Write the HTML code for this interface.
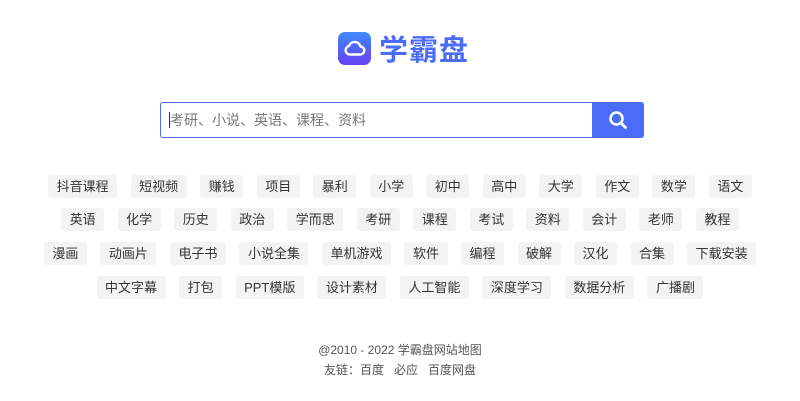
<!DOCTYPE html>
<html><head><meta charset="utf-8"><style>
body{margin:0;width:800px;height:401px;background:#fff;font-family:"Liberation Sans","Noto Sans CJK SC",sans-serif;overflow:hidden}
.logo{position:absolute;left:338px;top:27px;display:flex;align-items:center}
.ic{width:33px;height:33px;border-radius:7px;background:linear-gradient(180deg,#3d8bfd,#6a3df5);display:flex;align-items:center;justify-content:center}
.lt{margin-left:8px;font-size:29px;font-weight:bold;color:#4a6cf7;letter-spacing:1px;font-family:"Noto Sans CJK SC",sans-serif}
.search{position:absolute;left:160px;top:102px;width:484px;height:36px;display:flex}
.inp{flex:1;border:1px solid #4a6cf7;border-right:none;border-radius:3px 0 0 3px;box-sizing:border-box;font-size:14px;color:#777;line-height:34px;padding-left:8px}
.inp:before{content:"";display:inline-block;width:1px;height:16px;background:#333;vertical-align:-3px}
.btn{width:52px;background:#4a6cf7;border-radius:0 3px 3px 0;display:flex;align-items:center;justify-content:center}
.row{position:absolute;left:0;width:800px;display:flex;justify-content:center;gap:13.5px}
.row span{height:23px;line-height:23px;padding:0 8.5px;background:#f3f3f3;border-radius:3px;font-size:13px;color:#333}
.foot{position:absolute;left:0;width:800px;text-align:center;font-size:12px;color:#555}
</style></head><body>
<div class="logo"><div class="ic"><svg width="22" height="18" viewBox="0 0 22 18"><path d="M6 15.5h10a4 4 0 0 0 .5-8A6 6 0 0 0 5 7a4.3 4.3 0 0 0 1 8.5z" fill="none" stroke="#fff" stroke-width="2.4" stroke-linejoin="round"/></svg></div><div class="lt">学霸盘</div></div>
<div class="search"><div class="inp">考研、小说、英语、课程、资料</div><div class="btn"><svg width="20" height="20" viewBox="0 0 20 20"><circle cx="8.5" cy="8.5" r="6" fill="none" stroke="#fff" stroke-width="2.6"/><path d="M13 13l4.5 4.5" stroke="#fff" stroke-width="2.8" stroke-linecap="round"/></svg></div></div>
<div class="row" style="top:175px"><span>抖音课程</span><span>短视频</span><span>赚钱</span><span>项目</span><span>暴利</span><span>小学</span><span>初中</span><span>高中</span><span>大学</span><span>作文</span><span>数学</span><span>语文</span></div>
<div class="row" style="top:208px"><span>英语</span><span>化学</span><span>历史</span><span>政治</span><span>学而思</span><span>考研</span><span>课程</span><span>考试</span><span>资料</span><span>会计</span><span>老师</span><span>教程</span></div>
<div class="row" style="top:242px"><span>漫画</span><span>动画片</span><span>电子书</span><span>小说全集</span><span>单机游戏</span><span>软件</span><span>编程</span><span>破解</span><span>汉化</span><span>合集</span><span>下载安装</span></div>
<div class="row" style="top:276px"><span>中文字幕</span><span>打包</span><span>PPT模版</span><span>设计素材</span><span>人工智能</span><span>深度学习</span><span>数据分析</span><span>广播剧</span></div>
<div class="foot" style="top:341px">@2010 - 2022 学霸盘网站地图</div>
<div class="foot" style="top:361px">友链：百度&nbsp;&nbsp;&nbsp;必应&nbsp;&nbsp;&nbsp;百度网盘</div>
</body></html>
